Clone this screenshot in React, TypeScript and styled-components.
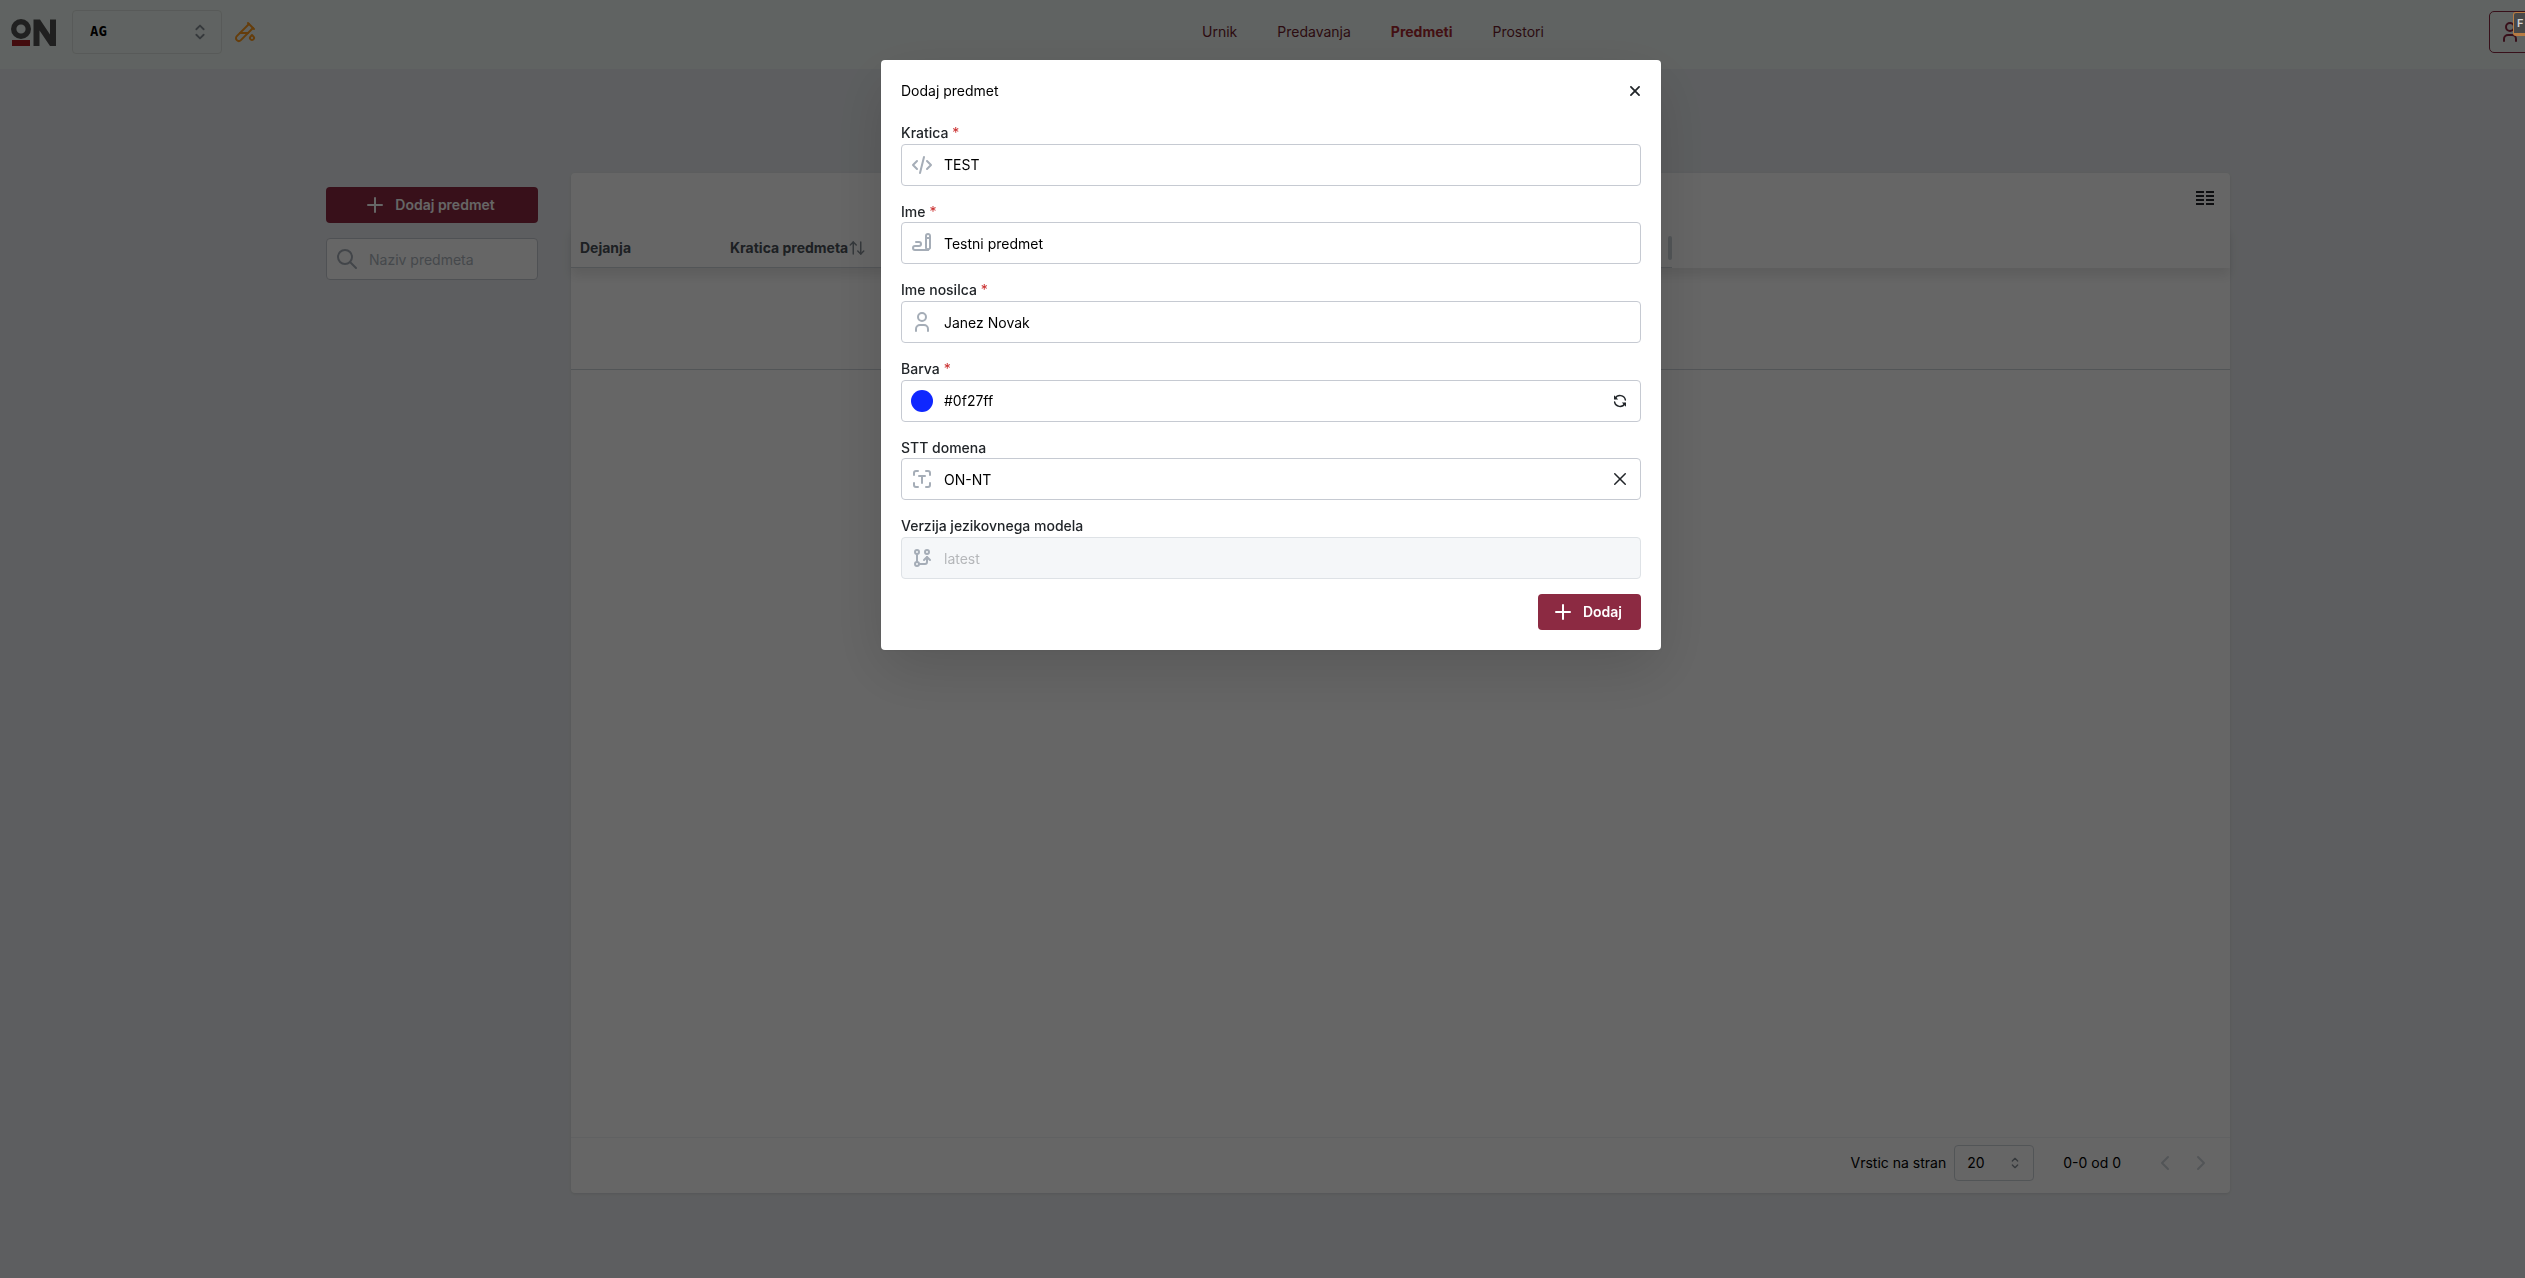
import React from 'react';
import styled, { createGlobalStyle, css } from 'styled-components';

const GlobalStyle = createGlobalStyle`
  *, *::before, *::after { box-sizing: border-box; }
  body {
    margin: 0;
    background: #e9ecef;
    color: #000;
    font-family: Inter, "Liberation Sans", sans-serif;
    font-size: 14px;
    line-height: 1.55;
    overflow: hidden;
  }
  button, input, select { font: inherit; color: inherit; }
`;

const Page = styled.div`
  min-height: 100vh;
`;

const Header = styled.header`
  display: flex;
  align-items: center;
  justify-content: space-between;
  height: 69px;
  padding: 0 0 5px 11px;
  background: #f1f8f4;
`;

const HeaderGroup = styled.div`
  display: flex;
  align-items: center;
`;

const Svg = styled.svg`
  display: block;
  flex: none;
  fill: none;
  stroke: currentColor;
  stroke-linecap: round;
  stroke-linejoin: round;
`;

const Logo = styled(Svg)`
  margin-right: 16px;
  stroke: none;
`;

const SelectBox = styled.span<{ $width: number; $height: number; $border: string }>`
  display: grid;
  align-items: center;
  width: ${(p) => p.$width}px;
  height: ${(p) => p.$height}px;
  border: 1px solid ${(p) => p.$border};
  border-radius: 4px;
  color: #868e96;

  > * { grid-area: 1 / 1; }
  > svg { justify-self: end; margin-right: 10px; pointer-events: none; }
`;

const Select = styled.select<{ $mono?: boolean }>`
  width: 100%;
  height: 100%;
  appearance: none;
  border: 0;
  background: transparent;
  color: #000;
  padding: 0 12px;
  ${(p) => p.$mono && css`
    padding: 0 17px;
    font-family: "DejaVu Sans Mono", "Liberation Mono", monospace;
    font-weight: 700;
  `}
`;

const LabLink = styled.a`
  margin-left: 11px;
  color: #fd9a1e;
`;

const Nav = styled.nav`
  display: flex;
  align-items: center;
  gap: 40px;
`;

const NavLink = styled.a<{ $active?: boolean }>`
  color: ${(p) => (p.$active ? '#a82a30' : '#6f1d2c')};
  font-weight: ${(p) => (p.$active ? 700 : 400)};
  text-decoration: none;
`;

const AccountClip = styled.div`
  width: 36px;
  height: 42px;
  overflow: hidden;
`;

const AccountButton = styled.button`
  position: relative;
  display: flex;
  align-items: center;
  width: 60px;
  height: 42px;
  padding: 0 8px;
  border: 1px solid #8c2a42;
  border-radius: 5px;
  background: transparent;
  color: #8c2a42;
`;

const AccountBadge = styled.span`
  position: absolute;
  z-index: 2;
  top: 0;
  left: 23px;
  width: 24px;
  height: 24px;
  padding: 0 3px;
  border: solid #b87c43;
  border-width: 1px 1px 3px 1px;
  border-radius: 3px;
  background: #484848;
  color: #d0d0d0;
  font-size: 11px;
  font-weight: 600;
  line-height: 20px;
  text-align: left;
`;

const Main = styled.main`
  display: flex;
  align-items: flex-start;
  gap: 33px;
  padding: 104px 295px 0 326px;
`;

const Sidebar = styled.aside`
  display: flex;
  flex-direction: column;
  flex: none;
  gap: 15px;
  width: 212px;
  padding-top: 14px;
`;

const PrimaryButton = styled.button`
  display: flex;
  align-items: center;
  justify-content: center;
  gap: 8px;
  height: 36px;
  padding: 0 19px 0 13px;
  border: 0;
  border-radius: 4px;
  background: #8c2a42;
  color: #fff;
  font-weight: 600;
`;

const Control = styled.div<{ $disabled?: boolean }>`
  display: flex;
  align-items: center;
  height: 42px;
  padding: 0 9px 0 8px;
  border: 1px solid ${(p) => (p.$disabled ? '#dee2e6' : '#c6cad2')};
  border-radius: 4px;
  background: ${(p) => (p.$disabled ? '#f5f7f9' : '#fff')};
  color: #a5adb7;
`;

const ControlInput = styled.input`
  flex: 1;
  min-width: 0;
  height: 100%;
  padding: 0 0 0 10px;
  border: 0;
  outline: 0;
  background: transparent;
  color: #000;

  &::placeholder { color: #adb5bd; opacity: 1; }
  &:disabled { color: #b5b7ba; }
`;

const Panel = styled.section`
  display: flex;
  flex: 1;
  flex-direction: column;
  min-width: 0;
  height: calc(100vh - 258px);
  border-radius: 4px;
  background: #fff;
  box-shadow: 0 1px 3px rgba(0, 0, 0, 0.1);
`;

const Toolbar = styled.div`
  display: flex;
  justify-content: flex-end;
  height: 52px;
  padding: 11px 11px 0 0;
`;

const IconButton = styled.button<{ $size: number }>`
  display: flex;
  align-items: center;
  justify-content: center;
  flex: none;
  width: ${(p) => p.$size}px;
  height: ${(p) => p.$size}px;
  padding: 0;
  border: 0;
  background: transparent;
  color: #212529;

  &:disabled { color: #ced4da; }
`;

const TableHead = styled.div`
  height: 43px;
  box-shadow: 0 8px 10px rgba(0, 0, 0, 0.09);
`;

const Table = styled.table`
  width: 1101px;
  height: 43px;
  border-collapse: collapse;
  table-layout: fixed;
  border-bottom: 1px solid #ced4da;
`;

const Th = styled.th<{ $width?: number }>`
  width: ${(p) => (p.$width ? `${p.$width}px` : 'auto')};
  padding: 3px 0 0 9px;
  color: #495057;
  font-weight: 700;
  text-align: left;
`;

const ThContent = styled.div`
  display: flex;
  align-items: center;
`;

const SortButton = styled.button`
  padding: 0;
  border: 0;
  background: transparent;
  color: #868e96;
`;

const ResizeHandle = styled.span`
  width: 4px;
  height: 24px;
  margin-left: auto;
  border-radius: 2px;
  background: #ced4da;
`;

const EmptyRow = styled.div`
  height: 102px;
  border-bottom: 1px solid #ced4da;
`;

const Footer = styled.footer`
  display: flex;
  align-items: center;
  justify-content: flex-end;
  height: 56px;
  margin-top: auto;
  padding: 0 17px 5px 0;
  border-top: 1px solid #f1f3f5;
`;

const RowsLabel = styled.label`
  margin-right: 8px;
`;

const PageRange = styled.span`
  margin: 0 32px 0 29px;
`;

const Pager = styled.div`
  display: flex;
  gap: 12px;
`;

const Overlay = styled.div`
  position: fixed;
  z-index: 1;
  inset: 0;
  display: flex;
  align-items: flex-start;
  justify-content: center;
  padding: 60px 17px 0 34px;
  background: rgba(0, 0, 0, 0.6);
`;

const Modal = styled.div`
  width: 780px;
  border-radius: 4px;
  background: #fff;
  box-shadow: 0 1px 3px rgba(0, 0, 0, 0.05), 0 20px 60px rgba(0, 0, 0, 0.14);
`;

const ModalHeader = styled.div`
  display: flex;
  align-items: center;
  justify-content: space-between;
  padding: 20px 15px 20px 20px;
`;

const ModalTitle = styled.h2`
  margin: 0;
  font-size: 14px;
  font-weight: 400;
`;

const Form = styled.form`
  display: flex;
  flex-direction: column;
  gap: 15px;
  padding: 0 20px 20px;
`;

const Label = styled.label`
  display: block;
  color: #212529;
  font-weight: 500;
`;

const Required = styled.span`
  color: #c92a2a;
  font-weight: 400;
`;

const Swatch = styled.span<{ $color: string }>`
  flex: none;
  width: 22px;
  height: 22px;
  margin: 0 1px;
  border-radius: 50%;
  background: ${(p) => p.$color};
`;

const Actions = styled.div`
  display: flex;
  justify-content: flex-end;
`;

const ICONS: Record<string, string[]> = {
  plus: ['M12 5v14', 'M5 12h14'],
  search: ['M10 3a7 7 0 1 0 0 14a7 7 0 1 0 0 -14', 'M21 21l-6 -6'],
  code: ['M7 8l-4 4l4 4', 'M17 8l4 4l-4 4', 'M14 4l-4 16'],
  writing: [
    'M20 17v-12c0 -1.121 -.879 -2 -2 -2s-2 .879 -2 2v12l2 2l2 -2z',
    'M16 7h4',
    'M18 19h-13a2 2 0 1 1 0 -4h4a2 2 0 1 0 0 -4h-3',
  ],
  user: ['M12 3a4 4 0 1 0 0 8a4 4 0 1 0 0 -8', 'M6 21v-2a4 4 0 0 1 4 -4h4a4 4 0 0 1 4 4v2'],
  text: [
    'M4 8v-2a2 2 0 0 1 2 -2h2',
    'M4 16v2a2 2 0 0 0 2 2h2',
    'M16 4h2a2 2 0 0 1 2 2v2',
    'M16 20h2a2 2 0 0 0 2 -2v-2',
    'M12 16v-7',
    'M9 9h6',
  ],
  branch: [
    'M7 16a2 2 0 1 0 0 4a2 2 0 1 0 0 -4',
    'M7 4a2 2 0 1 0 0 4a2 2 0 1 0 0 -4',
    'M17 4a2 2 0 1 0 0 4a2 2 0 1 0 0 -4',
    'M7 8v8',
    'M9 18h6a2 2 0 0 0 2 -2v-5',
    'M14 14l3 -3l3 3',
  ],
  pipe: [
    'M20 8.04l-12.122 12.124a2.857 2.857 0 1 1 -4.041 -4.04l12.122 -12.124',
    'M7 13h8',
    'M19 15l1.5 1.6a2 2 0 1 1 -3 0l1.5 -1.6z',
    'M15 3l6 6',
  ],
  selector: ['M8 9l4 -4l4 4', 'M16 15l-4 4l-4 -4'],
  left: ['M15 6l-6 6l6 6'],
  right: ['M9 6l6 6l-6 6'],
  sort: ['M7 4v16', 'M3 8l4 -4l4 4', 'M17 4v16', 'M13 16l4 4l4 -4'],
  close: ['M5 5l14 14', 'M19 5l-14 14'],
};

type IconProps = { name: string; size?: number; weight?: number };

const Icon = ({ name, size = 24, weight = 2 }: IconProps) => (
  <Svg width={size} height={size} viewBox="0 0 24 24" strokeWidth={weight} aria-hidden="true">
    {ICONS[name].map((d) => (
      <path key={d} d={d} />
    ))}
  </Svg>
);

const SyncIcon = () => (
  <Svg width={16} height={16} viewBox="0 0 16 16" strokeWidth={1.4} aria-hidden="true">
    <path d="M3.2 5.4A5.5 5.5 0 0 1 13.4 7M12.8 10.6A5.5 5.5 0 0 1 2.6 9" />
    <path d="M2 2.200v4.200h4.200zM14 13.800V9.600H9.800z" fill="currentColor" stroke="none" />
  </Svg>
);

const ColumnsIcon = () => (
  <Svg width={18} height={14} viewBox="0 0 18 14" aria-hidden="true">
    <path d="M0 1h8M10 1h8M0 5h8M10 5h8M0 9h8M10 9h8M0 13h8M10 13h8" strokeWidth={2} strokeLinecap="butt" />
  </Svg>
);

type FieldProps = {
  id: string;
  label: string;
  value: string;
  icon: React.ReactNode;
  required?: boolean;
  disabled?: boolean;
  action?: React.ReactNode;
};

const Field = ({ id, label, value, icon, required, disabled, action }: FieldProps) => (
  <div>
    <Label htmlFor={id}>
      {label}
      {required && <Required> *</Required>}
    </Label>
    <Control $disabled={disabled}>
      {icon}
      <ControlInput id={id} defaultValue={value} disabled={disabled} />
      {action}
    </Control>
  </div>
);

const NAV = ['Urnik', 'Predavanja', 'Predmeti', 'Prostori'];

export default function App() {
  return (
    <Page>
      <GlobalStyle />
      <Header>
        <HeaderGroup>
          <Logo width={45} height={27} viewBox="0 0 45 27" role="img" aria-label="ON">
            <circle cx="10" cy="10" r="7.3" stroke="#525252" strokeWidth="5.4" />
            <rect x="1" y="21" width="18" height="6" fill="#a81f24" />
            <path d="M22.5 27V0.5H29L39 15.5V0.5H45V27H39L28.5 11.5V27z" fill="#525252" />
          </Logo>
          <SelectBox $width={150} $height={44} $border="#dbe2de">
            <Select $mono aria-label="Skupina" defaultValue="AG">
              <option>AG</option>
            </Select>
            <Icon name="selector" size={22} />
          </SelectBox>
          <LabLink href="#lab" aria-label="Laboratorij">
            <Icon name="pipe" />
          </LabLink>
        </HeaderGroup>
        <Nav>
          {NAV.map((item) => (
            <NavLink key={item} href={`#${item}`} $active={item === 'Predmeti'}>
              {item}
            </NavLink>
          ))}
        </Nav>
        <AccountClip>
          <AccountButton aria-label="Profil">
            <Icon name="user" />
            <AccountBadge>F</AccountBadge>
          </AccountButton>
        </AccountClip>
      </Header>

      <Main>
        <Sidebar>
          <PrimaryButton>
            <Icon name="plus" />
            Dodaj predmet
          </PrimaryButton>
          <Control>
            <Icon name="search" />
            <ControlInput aria-label="Naziv predmeta" placeholder="Naziv predmeta" />
          </Control>
        </Sidebar>

        <Panel>
          <Toolbar>
            <IconButton $size={28} aria-label="Stolpci">
              <ColumnsIcon />
            </IconButton>
          </Toolbar>
          <TableHead>
            <Table>
              <thead>
                <tr>
                  <Th $width={150}>Dejanja</Th>
                  <Th>
                    <ThContent>
                      Kratica predmeta
                      <SortButton aria-label="Razvrsti">
                        <Icon name="sort" size={18} weight={2} />
                      </SortButton>
                      <ResizeHandle />
                    </ThContent>
                  </Th>
                </tr>
              </thead>
            </Table>
          </TableHead>
          <EmptyRow />
          <Footer>
            <RowsLabel htmlFor="rows">Vrstic na stran</RowsLabel>
            <SelectBox $width={80} $height={36} $border="#ced4da">
              <Select id="rows" defaultValue="20">
                <option>20</option>
              </Select>
              <Icon name="selector" size={16} />
            </SelectBox>
            <PageRange>0-0 od 0</PageRange>
            <Pager>
              <IconButton $size={24} disabled aria-label="Prejšnja stran">
                <Icon name="left" />
              </IconButton>
              <IconButton $size={24} disabled aria-label="Naslednja stran">
                <Icon name="right" />
              </IconButton>
            </Pager>
          </Footer>
        </Panel>
      </Main>

      <Overlay>
        <Modal role="dialog" aria-modal="true" aria-labelledby="modal-title">
          <ModalHeader>
            <ModalTitle id="modal-title">Dodaj predmet</ModalTitle>
            <IconButton $size={22} aria-label="Zapri">
              <Icon name="close" size={14} weight={3} />
            </IconButton>
          </ModalHeader>
          <Form>
            <Field id="code" label="Kratica" value="TEST" required icon={<Icon name="code" />} />
            <Field id="name" label="Ime" value="Testni predmet" required icon={<Icon name="writing" />} />
            <Field id="holder" label="Ime nosilca" value="Janez Novak" required icon={<Icon name="user" />} />
            <Field
              id="color"
              label="Barva"
              value="#0f27ff"
              required
              icon={<Swatch $color="#0f27ff" />}
              action={
                <IconButton type="button" $size={22} aria-label="Naključna barva">
                  <SyncIcon />
                </IconButton>
              }
            />
            <Field
              id="domain"
              label="STT domena"
              value="ON-NT"
              icon={<Icon name="text" />}
              action={
                <IconButton type="button" $size={22} aria-label="Počisti">
                  <Icon name="close" size={18} weight={2} />
                </IconButton>
              }
            />
            <Field
              id="version"
              label="Verzija jezikovnega modela"
              value="latest"
              disabled
              icon={<Icon name="branch" />}
            />
            <Actions>
              <PrimaryButton type="submit">
                <Icon name="plus" />
                Dodaj
              </PrimaryButton>
            </Actions>
          </Form>
        </Modal>
      </Overlay>
    </Page>
  );
}
